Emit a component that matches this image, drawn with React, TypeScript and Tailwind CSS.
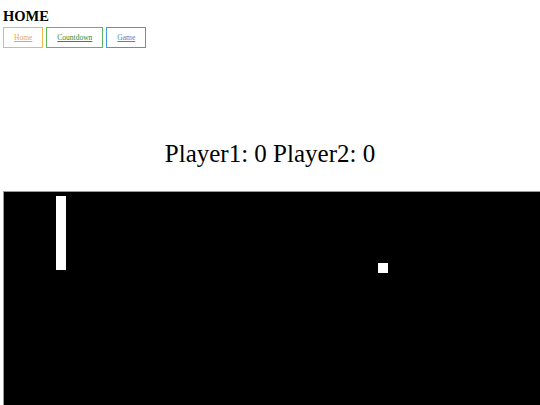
import React from "react";

const links = [
  { label: "Home", border: "border-[#f0b848]", text: "text-[#e8a838]" },
  { label: "Countdown", border: "border-[#5cb85c]", text: "text-[#2e8b2e]" },
  { label: "Game", border: "border-[#3d9be0]", text: "text-[#3b8ad0]" },
];

export default function App() {
  return (
    <div className="h-[405px] overflow-hidden bg-white font-['Liberation_Serif',serif] text-black">
      <div className="px-[3px] pt-[9px]">
        <h1 className="text-[14.5px] font-bold leading-[15px]">HOME</h1>
        <nav className="mt-[3px] flex gap-[3px]">
          {links.map((l) => (
            <div
              key={l.label}
              className={`border ${l.border} flex h-[21px] items-center px-[10px]`}
            >
              <a href="#" className={`${l.text} text-[7.5px] underline leading-none`}>
                {l.label}
              </a>
            </div>
          ))}
        </nav>
      </div>

      <p className="mt-[91px] text-center text-[25px] leading-[30px]">Player1: 0 Player2: 0</p>

      <div className="relative ml-[3px] mt-[22px] h-[260px] w-[560px] border border-[#9a9a9a] bg-black">
        {/* paddle */}
        <div className="absolute left-[52px] top-[4px] h-[74px] w-[10px] bg-white" />
        {/* ball */}
        <div className="absolute left-[374px] top-[71px] h-[10px] w-[10px] bg-white" />
      </div>
    </div>
  );
}
